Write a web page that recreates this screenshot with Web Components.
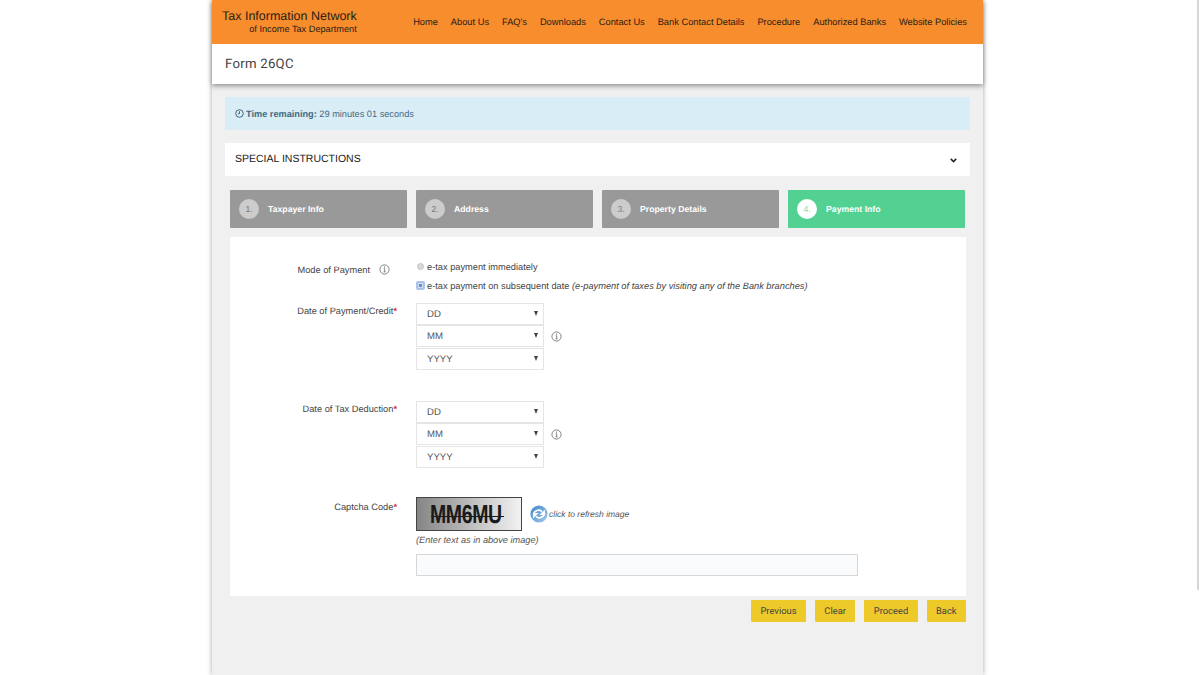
<!DOCTYPE html>
<html>
<head>
<meta charset="utf-8">
<title>Form 26QC</title>
<style>
  html, body { margin: 0; height: 100%; overflow: hidden; background: #fff; }
  body { font-family: "Liberation Sans", Arial, sans-serif; color: #333; text-rendering: geometricPrecision; }
  .scroll-thumb { position: fixed; right: 1px; top: 0; width: 2px; height: 590px; background: #d6d6d6; }
</style>
</head>
<body>
<tin-page>
  <tin-header slot="header"></tin-header>
  <tin-title slot="header">Form 26QC</tin-title>
  <tin-alert>29 minutes 01 seconds</tin-alert>
  <tin-accordion>SPECIAL INSTRUCTIONS</tin-accordion>
  <tin-steps>
    <tin-step num="1.">Taxpayer Info</tin-step>
    <tin-step num="2.">Address</tin-step>
    <tin-step num="3.">Property Details</tin-step>
    <tin-step num="4." active>Payment Info</tin-step>
  </tin-steps>
  <tin-card>
    <tin-row label="Mode of Payment" info style="--row-h:46px">
      <tin-radio>e-tax payment immediately</tin-radio>
      <tin-radio checked>e-tax payment on subsequent date <i>(e-payment of taxes by visiting any of the Bank branches)</i></tin-radio>
    </tin-row>
    <tin-row label="Date of Payment/Credit" required style="--row-h:98px">
      <tin-date></tin-date>
    </tin-row>
    <tin-row label="Date of Tax Deduction" required style="--row-h:96px">
      <tin-date></tin-date>
    </tin-row>
    <tin-row label="Captcha Code" required style="--label-top:4px">
      <tin-captcha></tin-captcha>
    </tin-row>
  </tin-card>
  <tin-actions>
    <tin-button>Previous</tin-button>
    <tin-button>Clear</tin-button>
    <tin-button>Proceed</tin-button>
    <tin-button>Back</tin-button>
  </tin-actions>
</tin-page>
<div class="scroll-thumb"></div>

<script>
// small helper so every element just declares its shadow markup
function define(name, html, proto) {
  const template = document.createElement('template');
  template.innerHTML = html;
  class El extends HTMLElement {
    constructor() {
      super();
      this._shadowRoot = this.attachShadow({ mode: 'open' });
      this._shadowRoot.appendChild(template.content.cloneNode(true));
    }
    connectedCallback() {
      if (proto) proto.call(this, this._shadowRoot);
    }
  }
  customElements.define(name, El);
}

const infoIcon = `<svg width="11" height="11" viewBox="0 0 11 11" fill="none" stroke="#666" stroke-width=".8">
  <circle cx="5.5" cy="5.5" r="4.6"/><path d="M4.7 4.8h1v3M4.5 7.9h2.1"/><path d="M5.5 2.6v1.1" stroke-width="1"/></svg>`;

define('tin-page', `
  <style>
    :host { display: block; width: 771px; min-height: 675px; margin-left: 212px; background: #f0f0f0;
      box-shadow: 0 0 5px rgba(0,0,0,.35); }
    .top { position: relative; box-shadow: 0 2px 5px rgba(0,0,0,.4); }
    .body { padding: 13px 13px 0; display: flex; flex-direction: column; }
  </style>
  <div class="top"><slot name="header"></slot></div>
  <div class="body"><slot></slot></div>
`);

define('tin-header', `
  <style>
    :host { display: flex; height: 44px; background: #f78d2d; justify-content: space-between; align-items: center;
      padding: 0 16px 0 10px; color: #2a2015; }
    .brand { display: flex; flex-direction: column; align-items: flex-end; }
    .brand b { font-weight: normal; font-size: 12.5px; line-height: 14px; }
    .brand span { font-size: 9.2px; line-height: 12px; }
    nav { display: flex; gap: 12.9px; font-size: 9.3px; }
  </style>
  <div class="brand"><b>Tax Information Network</b><span>of Income Tax Department</span></div>
  <nav>
    <span>Home</span><span>About Us</span><span>FAQ's</span><span>Downloads</span><span>Contact Us</span>
    <span>Bank Contact Details</span><span>Procedure</span><span>Authorized Banks</span><span>Website Policies</span>
  </nav>
`);

define('tin-title', `
  <style>
    :host { display: flex; align-items: center; height: 40px; box-sizing: border-box; padding: 1px 0 0 13px; background: #fff;
      font: 13.2px Roboto, "Liberation Sans", sans-serif; letter-spacing: .25px; color: #444; }
  </style>
  <slot></slot>
`);

define('tin-alert', `
  <style>
    :host { display: flex; align-items: center; gap: 2px; height: 33px; padding-left: 10px; background: #d9edf7;
      font-size: 9.2px; color: #41697f; }
    b { font-weight: bold; }
    svg { display: block; }
  </style>
  <svg width="9" height="9" viewBox="0 0 9 9" fill="none" stroke="#41697f" stroke-width="1">
    <circle cx="4.5" cy="4.5" r="3.8"/><path d="M4.5 2.2v2.5H2.8"/></svg>
  <span><b>Time remaining:</b> <slot></slot></span>
`);

define('tin-accordion', `
  <style>
    :host { display: flex; align-items: center; justify-content: space-between; height: 33px; margin-top: 13px;
      padding: 0 13px 0 10px; background: #fff; font-size: 10.5px; color: #222; }
    span { margin-top: -1px; }
    svg { display: block; margin-top: 2px; }
  </style>
  <span><slot></slot></span>
  <svg width="7" height="5" viewBox="0 0 7 5" fill="none" stroke="#222" stroke-width="1.5"><path d="M.8 .9l2.7 2.7L6.2 .9"/></svg>
`);

define('tin-steps', `
  <style>
    :host { display: grid; grid-template-columns: repeat(4, 177px); gap: 9px; margin: 14px 4px 0 5px; }
  </style>
  <slot></slot>
`);

define('tin-step', `
  <style>
    :host { display: flex; align-items: center; height: 38px; padding-left: 9px; background: #999; border-radius: 1px;
      color: #fff; font-size: 8.7px; font-weight: bold; box-sizing: border-box; }
    :host([active]) { background: #52d192; }
    .num { width: 20px; height: 20px; border-radius: 50%; background: #ccc; color: #777; font-weight: normal;
      display: flex; align-items: center; justify-content: center; margin-right: 9px; font-size: 8.6px; flex: none; }
    :host([active]) .num { background: #fff; color: #8fdcb6; }
    .text { margin-top: -1px; }
  </style>
  <span class="num"></span><span class="text"><slot></slot></span>
`, function (root) {
  root.querySelector('.num').textContent = this.getAttribute('num');
});

define('tin-card', `
  <style>
    :host { display: block; height: 359px; margin: 9px 4px 0 5px; padding-top: 20px; box-sizing: border-box; background: #fff; }
  </style>
  <slot></slot>
`);

define('tin-row', `
  <style>
    :host { display: flex; min-height: var(--row-h, 0); font-size: 9.25px; color: #444; }
    .label { width: 167px; flex: none; display: flex; justify-content: flex-end; align-items: flex-start; gap: 9px;
      padding-top: var(--label-top, 2px); line-height: 12px; box-sizing: content-box; }
    :host([info]) .label { padding-right: 7px; width: 160px; padding-top: 7px; }
    .req { color: #d9263c; font-weight: bold; }
    .field { margin-left: 19px; }
    svg { display: block; }
  </style>
  <div class="label"></div>
  <div class="field"><slot></slot></div>
`, function (root) {
  const label = root.querySelector('.label');
  const req = this.hasAttribute('required') ? '<span class="req">*</span>' : '';
  label.innerHTML = `<span>${this.getAttribute('label')}${req}</span>` + (this.hasAttribute('info') ? infoIcon : '');
});

define('tin-radio', `
  <style>
    :host { display: flex; align-items: center; height: 19px; font-size: 9.25px; color: #444; white-space: nowrap; }
    .dot { width: 7px; height: 7px; border-radius: 50%; background: #d8d8d8; border: 1px solid #c4c4c4; box-sizing: border-box;
      margin: 0 3px 0 1px; flex: none; }
    :host([checked]) .dot { width: 9px; height: 9px; margin: 0 2px 0 0; border-radius: 2px; background: #6d8fc9; border: 2px solid #a9c2ea;
      box-shadow: inset 0 0 0 1px #cfdcf2; }
    ::slotted(i) { color: #444; }
  </style>
  <span class="dot"></span><span><slot></slot></span>
`);

define('tin-select', `
  <style>
    :host { display: flex; align-items: center; justify-content: space-between; width: 128px; height: 22px; box-sizing: border-box;
      padding: 1px 5px 0 10px; background: #fff; border: 1px solid #e5e5e5; font-size: 9.6px; color: #555; }
    .arrow { width: 0; height: 0; margin-top: -2px; border-left: 2.8px solid transparent; border-right: 2.8px solid transparent; border-top: 5.5px solid #444; }
  </style>
  <span><slot></slot></span><span class="arrow"></span>
`);

define('tin-date', `
  <style>
    :host { display: flex; align-items: center; gap: 7px; font-size: 9.6px; }
    .stack { display: flex; flex-direction: column; gap: .3px; }
    svg { display: block; }
  </style>
  <div class="stack">
    <tin-select>DD</tin-select>
    <tin-select>MM</tin-select>
    <tin-select>YYYY</tin-select>
  </div>
  ${infoIcon}
`);

define('tin-captcha', `
  <style>
    :host { display: block; font-size: 8.5px; color: #555; font-style: italic; }
    .line { display: flex; align-items: center; }
    .img { width: 106px; height: 34px; box-sizing: border-box; border: 1px solid #444; display: flex; align-items: center; justify-content: flex-start;
      background: linear-gradient(90deg, #858585, #f2f2f2); position: relative; overflow: hidden; padding-left: 13px;
      font: bold 26px/32px "Liberation Sans", sans-serif; color: #1a1a1a; font-style: normal; }
    .img span { display: block; transform: scaleX(.75); transform-origin: left center; letter-spacing: -.5px; }
    .img::after { content: ""; position: absolute; left: 14px; right: 17px; top: 18px; height: 1.4px; background: #1a1a1a; }
    svg { display: block; margin-left: 8px; margin-right: 1px; }
    .hint { margin: 3px 0 8px; line-height: 12px; font-size: 9.2px; }
    .input { width: 442px; height: 22px; box-sizing: border-box; background: #fafbfc; border: 1px solid #d6d6d6; }
  </style>
  <div class="line">
    <div class="img"><span>MM6MU</span></div>
    <svg width="18" height="18" viewBox="0 0 18 18">
      <defs><linearGradient id="rf" x1="0" y1="0" x2="1" y2="1"><stop offset="0" stop-color="#3f86cc"/><stop offset="1" stop-color="#a4cbec"/></linearGradient></defs>
      <circle cx="9" cy="9" r="8.6" fill="url(#rf)"/>
      <path d="M3.4 9.6C4.2 5.4 9.4 3.8 12 6.6" stroke="#fff" stroke-width="1.6" fill="none"/>
      <path d="M15 4.4v5.6H9.4z" fill="#fff"/>
      <g transform="rotate(180 9 9)">
        <path d="M3.4 9.6C4.2 5.4 9.4 3.8 12 6.6" stroke="#fff" stroke-width="1.6" fill="none"/>
        <path d="M15 4.4v5.6H9.4z" fill="#fff"/>
      </g>
    </svg>
    <span>click to refresh image</span>
  </div>
  <div class="hint">(Enter text as in above image)</div>
  <div class="input"></div>
`);

define('tin-actions', `
  <style>
    :host { display: flex; justify-content: flex-end; gap: 9px; margin: 4px 4px 0 0; }
  </style>
  <slot></slot>
`);

define('tin-button', `
  <style>
    :host { display: flex; align-items: center; height: 22px; padding: 0 9.4px; box-sizing: border-box; background: #eec92a; border-radius: 1px;
      font: 9.4px Roboto, "Liberation Sans", sans-serif; color: #444; }
  </style>
  <slot></slot>
`);
</script>
</body>
</html>
